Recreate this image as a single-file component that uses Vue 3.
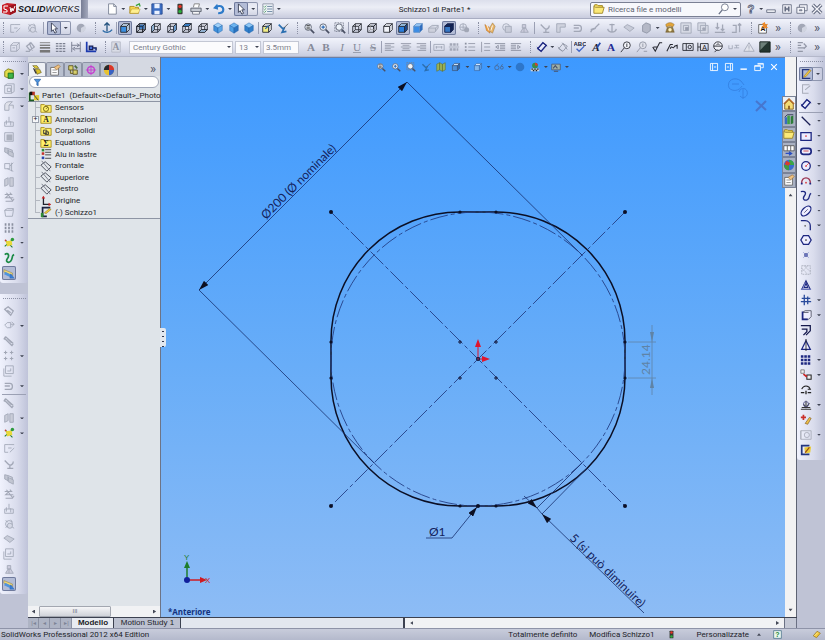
<script setup>
import { h, ref } from 'vue'

const G = '#a2a7b6'
const N = '#1d2780'
const K = '#23252e'

const line = (d, c = G, w = 1, f = 'none') => `<path d="${d}" stroke="${c}" stroke-width="${w}" fill="${f}"/>`
const cube = (front, top, side, c = K) =>
  line('M2 5h7v7h-7z', c, 1, front) + line('M2 5l3-3h7l-3 3z', c, 1, top) + line('M9 5l3-3v7l-3 3z', c, 1, side)
const wire = (c = K) => line('M2 5h7v7h-7zM2 5l3-3h7l-3 3M12 2v7l-3 3M5 2v7h7M5 9l-3 3', c)
const iso = (a, b, c) =>
  line('M7 1l5 3l-5 3l-5-3z', '#1d5fa8', 0.5, a) + line('M2 4l5 3v6l-5-3z', '#1d5fa8', 0.5, b) + line('M12 4l-5 3v6l5-3z', '#1d5fa8', 0.5, c)
const glass = (inner, c = '#555b6b') =>
  `<circle cx="6" cy="6" r="3.8" stroke="${c}" fill="#eef3fa"/>` + line('M9 9l4 4', '#4a5064', 2) + inner
const letter = (t, c, extra = '') =>
  `<text x="7" y="12" text-anchor="middle" font-family="Liberation Serif, serif" font-size="13" fill="${c}" ${extra}>${t}</text>`
const folder = (inner) => line('M1 3h4l1 1h7v8h-12z', '#a48a1c', 1, '#fff06a') + inner
const pencil = (c = '#f0c63c') => line('M5 9l6-7l2 1l-6 7l-3 1z', '#8a6414', 0.5, c)

const icons = {
  doc: line('M3 1h6l3 3v9h-9z', '#777f92', 1, '#fff') + line('M9 1v3h3', '#777f92'),
  open: line('M1 4h5l1 1h4v7h-10z', '#a8871c', 1, '#f7d750') + line('M3 7h10l-2 5h-10z', '#a8871c', 0.5, '#ffef8f') + line('M8 3l4-2l1 3', '#3ba33b', 1.5),
  save: line('M1 1h12v12h-12z', '#25478f', 1, '#3d6fc4') + '<path d="M4 1h6v5h-6zM4 9h6v4h-6z" fill="#eaf1ff"/>',
  lights: '<rect x="4" y="1" width="6" height="12" rx="1" fill="#363b35"/><circle cx="7" cy="4" r="2" fill="#e53427"/><circle cx="7" cy="10" r="2" fill="#2cae3c"/>',
  print: line('M4 5l1-4h6l-1 4', '#777', 1, '#fff') + line('M1 6h12v4h-12z', '#555b68', 1, '#c4c9d2') + line('M3 10h8v3h-8z', '#6c7280', 1, '#fff'),
  undo: line('M3 5c5-3 9-1 9 3s-4 4-6 4', '#2e7bc9', 2.5) + '<path d="M0 6l5-5l1 7z" fill="#2e7bc9"/>',
  cursor: line('M4 1v10l2-2l2 4l2-1l-2-4h3z', '#30374d', 1, '#fff'),
  options: line('M1 1h12v12h-12z', '#8a92a4', 1, '#eef3f8') + line('M6 4h6M6 7h6M6 10h6', '#5a7896') + line('M2 4l1 1l2-2M2 7l1 1l2-2M2 10l1 1l2-2', '#4c9a5e'),
  help: '<text x="7" y="12" text-anchor="middle" font-family="Liberation Sans, sans-serif" font-weight="700" font-size="13" fill="#fff" stroke="#59617a">?</text>',
  min: line('M2 8h10v3h-10z', '#646b80', 1, '#f4f5fa'),
  restore: line('M2 2h10v10h-10z', '#646b80', 1, '#f4f5fa') + line('M5 4v6M9 4v6M5 7h4', '#646b80', 2),
  windows: line('M4 2h9v7h-9z', '#646b80', 1, '#f4f5fa') + line('M1 5h9v7h-9z', '#646b80', 1, '#f4f5fa') + line('M4 8h3v1h-3z', '#646b80'),
  close: line('M2 2l10 10M12 2l-10 10', '#646b80', 4) + line('M2 2l10 10M12 2l-10 10', '#f4f5fa', 1.5),
  search: '<circle cx="8" cy="5" r="4" stroke="#697186" fill="#fff"/>' + line('M5 8l-4 5', '#697186', 1.5),
  folderY: line('M1 4l1-2h3l1 1h5v2', '#9c8320', 1, '#f2d64e') + line('M1 12v-8l2 1h10l-2 7z', '#9c8320', 1, '#fbe978'),

  gSketch: line('M2 12v-9h4M6 3h7M6 7h4M2 12h4M8 12l5-5'),
  gGear: line('M3 3l3 2M9 2l2 3M3 11l3-2M10 10l3 2') + `<circle cx="7" cy="7" r="4" stroke="${G}" fill="none"/><circle cx="8" cy="9" r="3" stroke="${G}" fill="#d6d9e6"/>`,
  gBall: `<circle cx="7" cy="7" r="5" fill="${G}"/><path d="M7 7l5-3v6l-5 3z" fill="#d0d4e0"/>`,
  normal: line('M7 1v10M4 4l3-3l3 3', '#23527f', 1.5) + line('M2 10c3 3 8 3 11-1', '#2d6ca8', 1.5),
  vFront: cube('#3c8fe0', '#cfe4f8', '#cfe4f8'),
  vBack: cube('#dfe6f2', '#dfe6f2', '#dfe6f2') + '<path d="M5 3h6v5h-6z" fill="#3277c4"/>' + wire(),
  vLeft: wire() + line('M2 5l3-3v7l-3 3z', K, 1, '#a7cdf2'),
  vRight: wire() + line('M9 5l3-3v7l-3 3z', K, 1, '#77b1ea'),
  vTop: wire() + line('M2 5l3-3h7l-3 3z', K, 1, '#3c8fe0'),
  vBottom: wire() + line('M2 12l3-3h7l-3 3z', K, 1, '#a7cdf2'),
  iso1: iso('#9fd0f8', '#3d8fdb', '#5aa6e8'),
  iso2: iso('#6db4f0', '#4f9fe4', '#2c74c0'),
  iso3: iso('#8cc6f5', '#2f7fcc', '#2f7fcc'),
  viewSel: cube('#f3ee86', '#eee', '#eee') + line('M5 8l4-4', '#2d6ca8', 1.5),
  spray: line('M2 3l5 5M9 6l-3 6l5-1', '#2b6fb0', 2) + line('M8 7l5-5', '#555', 1),
  zFit: glass(line('M4 6h4M4 4h4M4 8h4', '#333')),
  zIn: glass(line('M4 6h4M6 4v4', '#2d6cb8', 1.5)),
  zArea: '<path d="M1 1h10v10h-10z" stroke="#777d8d" stroke-dasharray="2 1"/>' + glass(''),
  wire: wire(),
  hidden: cube('none', 'none', 'none') + line('M5 3v6h6M5 9l-2 2', '#999'),
  noHidden: cube('#f1f3f9', '#f1f3f9', '#f1f3f9'),
  shadeEdge: cube('#2c7fdc', '#a7d2fb', '#1a4e9b'),
  shade: cube('#3b8de6', '#9dcdf9', '#2766bd', '#5c8fc8'),
  gCube: line('M2 7l4-3h7l-3 3zM2 7v5h7l4-5v-3M10 7v4', G, 1, '#cdd0dc'),
  shadow: cube('#3677c4', '#14285a', '#14285a', '#101c48'),
  gGlobe: `<circle cx="6" cy="6" r="4" stroke="${G}" fill="none"/><circle cx="10" cy="9" r="3" fill="${G}"/>` + line('M2 6h8M6 2v8'),
  hands: line('M1 3l2 7l4 3l-1-7z', '#a25d17', 0.5, '#f2a341') + line('M7 6l3-5l3 4l-3 8l-3-2z', '#8c6a38', 0.5, '#e8b569') + line('M3 3l3 7M10 4l-2 6', '#fff'),
  gCirc: `<circle cx="6" cy="6" r="4" stroke="${G}" fill="none"/>` + line('M5 5h7v7h-7z', G, 1, '#c8ccd9'),
  gPers: line('M5 3h4v4h-4zM3 12l3-5h3l3 5zM7 7v5', G, 1, '#ccd'),
  gHook: line('M2 3l4 4c3 3 6 0 6-3M5 12h7M8 8v4', G, 1.5),
  gFlag: line('M2 12v-10h10v4h-6v6z', G, 1, '#cfd2de'),
  gPipe: line('M2 4h6c4 0 4 7 0 7h-6M2 7h6', G, 1.5),
  gSwoop: line('M2 12c2-7 5-1 6-6l4-4M2 9l5-2', G, 1.5),
  gAnchor: line('M7 2v10M4 3h6M2 8c1 5 9 5 10 0', G, 1.5),
  gArrows: line('M1 6l4-3l8 4l-5 4l-4-3z', G, 1, '#c8ccd9'),
  gBox: line('M3 4l4-3l5 2v7l-4 3l-5-2z', '#8f95a5', 1, '#b4b8c6'),
  gSq: line('M1 1h12v12h-12zM4 4h6v6h-6z', G, 1, '#d8dbe6') + '<path d="M6 6h4v4h-4z" fill="#989dad"/>',
  gSq2: line('M1 1h9v9h-9zM4 4h9v9h-9z', G, 1, '#d8dbe6') + `<circle cx="8" cy="8" r="2" fill="${G}"/>`,
  gDown: line('M1 12h12M4 1v7M2 6l2 2l2-2M10 3v7M8 8l2 2l2-2', G, 1.5),
  gUp: line('M1 12h5v-8h-4M10 12v-10M8 4l2-2l2 2', G, 1.5),
  phone: line('M2 3c3-3 7-3 10 0l-2 3l-2-1h-3l-2 1z', '#7a5a1e', 0.5, '#e2a53a') + line('M4 6h6l2 6h-10z', '#6a5520', 0.5, '#8d7640') + '<circle cx="7" cy="9" r="2" fill="#fff3c0"/>',
  newA: line('M2 3h9v10h-9z', '#555', 1, '#fff') + '<text x="4" y="11" font-family="Liberation Sans" font-size="8" font-weight="700" fill="#111">A</text><path d="M9 0l1 3l3-1l-2 3l2 2l-3 0l-1 2l-1-3l-3 0l2-2l-1-2z" fill="#ef8b28"/>',
  gLayer: line('M2 5l3-3h7v7l-3 3h-7zM2 5h7v7M9 5l3-3', G) + line('M4 8h3', G),
  gPaint: line('M3 6l5-4l4 5l-5 4zM2 12h5M6 2l4 9', G, 1.5),
  lines: line('M1 2h12', '#777') + line('M1 5h12', '#777', 1.5) + line('M1 8h12', '#777', 2) + line('M1 12h12', '#777', 3),
  dashes: `<path d="M1 3h12M1 6h12M1 9h12M1 12h12" stroke="#7b8090" stroke-width="1.5" stroke-dasharray="3 1"/>`,
  gDims: line('M2 1v12M12 1v12M2 5h9M5 9h7M8 3l3 2l-3 2M6 7l-3 2l3 2', '#70768a'),
  layerBlue: line('M2 1v11h11', '#1c3bb0', 2) + line('M5 6h4v4h-4zM9 8h4v3', '#16205c', 1.5, '#4773e0'),
  gA: line('M2 1h10v12h-10z', '#b4b8c6', 1, '#d9dce6') + '<text x="7" y="11" text-anchor="middle" font-family="Liberation Serif" font-size="11" font-weight="700" fill="#8d92a2">A</text>',
  tA: letter('A', '#858a99', 'font-weight="700"'),
  tB: letter('B', '#858a99', 'font-weight="700"'),
  tI: letter('I', '#858a99', 'font-style="italic"'),
  tU: letter('U', '#858a99', 'text-decoration="underline"'),
  tS: letter('S', '#858a99', 'text-decoration="line-through"'),
  alL: line('M1 3h11M1 5h7M1 7h11M1 9h7M1 11h10', '#9297a6'),
  alC: line('M1 3h12M3 5h8M1 7h12M3 9h8M2 11h10', '#9297a6'),
  alR: line('M2 3h11M6 5h7M2 7h11M6 9h7M3 11h10', '#9297a6'),
  gFit: line('M1 4h12v7h-12zM3 7h8M4 6v3M10 6v3', G),
  gDots: `<path d="M2 4h10M2 10h10" stroke="${G}" stroke-width="3" stroke-dasharray="3 1"/>` + line('M1 7h12'),
  bullets: line('M5 3h8M5 7h8M5 11h8', '#9297a6') + line('M1 3h2M1 7h2M1 11h2', '#8a8f9f', 2),
  numbers: line('M6 3h7M6 7h7M6 11h7M3 1v12', '#9297a6'),
  indL: line('M1 3h12M7 5h6M7 7h6M7 9h6M1 11h12M5 5l-3 2l3 2z', '#8a8f9f'),
  indR: line('M1 3h12M1 5h6M1 7h6M1 9h6M1 11h12M9 5l3 2l-3 2z', '#8a8f9f'),
  dim: line('M2 9l6-7l4 3l-6 7z', N, 1.5, '#e9ecfb') + line('M1 7l5 5M8 2l5 4', N, 1),
  gDim: line('M2 9l5-6l5 3l-5 6zM6 2l6 8M1 7l5 5', '#8d93a3'),
  abc: '<text x="7" y="6" text-anchor="middle" font-family="Liberation Sans" font-size="7" font-weight="700" fill="#1a1d3c">ABC</text>' + line('M3 9l3 3l6-6', '#3d63c8', 1.5),
  fmt: letter('A', '#1b1f35', 'font-weight="700" font-style="italic"') + line('M8 8l4-6', '#274aaa', 2),
  blueA: letter('A', '#1f2c96', 'font-weight="700"'),
  bal: `<circle cx="8" cy="5" r="4" stroke="${K}" fill="#f4f5fb"/>` + line('M5 8l-4 5M8 3v4', K),
  gBal: `<circle cx="8" cy="5" r="4" stroke="#8d92a2" fill="#e0e2eb"/>` + line('M5 8l-4 5M8 3v4M9 12h4', '#8d92a2'),
  rough: line('M2 7l3 5l5-10h3M3 7h5', K, 1.2),
  weld: line('M1 12l4-8h3M5 9c2-5 3 2 5-3l3-1v4', K, 1.2),
  tol: line('M1 3h12v8h-12zM5 3v8', K) + `<circle cx="9" cy="7" r="2" stroke="${K}" fill="none"/>`,
  datum: line('M1 2v10M1 7h3M4 3h9v8h-9z', K) + '<text x="6" y="10" font-family="Liberation Sans" font-size="8" fill="#222">A</text>',
  target: `<circle cx="7" cy="6" r="5" stroke="${K}" fill="#f0f1f7"/>` + line('M2 6h10M3 13l3-3M5 5l2-2l2 2', K),
  gUs: line('M1 5v4h4v-4M7 8h6M10 5v3M8 5l5 0', G),
  gWarn: line('M7 2l6 10h-12zM7 5v4M7 10v1', G, 1, '#e2e4ec'),
  hatch: '<path d="M1 1h12v12h-12z" fill="#23352f"/><path d="M1 1h10l-10 10z" fill="#6c7f78"/>' + line('M1 1h12v12h-12z', '#14201c'),
  gList: line('M2 2h6M2 5h4M2 8h8M2 12h6M9 3l3 3l-3 3', '#9297a6', 1.5),

  boss: line('M2 4l4-3l6 2v7l-5 2l-5-2z', '#7a7a1a', 1, '#e3dc4a') + line('M6 6h6v6h-6z', '#166a1f', 1, '#3fb548'),
  gCut: line('M2 3l3-2h8v9l-3 2h-8zM2 3h8v9M5 6h4v4h-4z'),
  gFillet: line('M2 12v-5c0-4 3-5 6-5h3l-4 4v6zM7 6h5v4', G, 1, '#dfe1ea'),
  gRib: line('M7 1v6M2 7h10v5h-10zM4 5v5M9 6v5', G, 1),
  gShell: line('M2 2h10v10h-10z', G, 1) + '<path d="M4 4h7v7h-7z" fill="#abb0bd"/>',
  gDraft: line('M2 2l4 1v6l-4-2zM6 5l6 3v5l-6-3zM6 3l5 2v3', G, 1, '#c2c6d2'),
  gMove: line('M2 3h6v6h-6zM8 6l4-4M5 9l7 3M10 2v10'),
  gMir: line('M2 12v-8l4-2v8zM8 12v-10h4v10z', G, 1, '#c9ccd8'),
  gSwap: line('M2 4h8l-2-2M12 8h-9l3-3M3 12h8l2-3M4 2l7 9', G, 1.2),
  gWrap: line('M2 5l3-2h7v3l-1 6h-8zM2 5h9l1-2'),
  gGrid: `<path d="M2 3h11M2 7h11M2 11h11" stroke="#8c91a1" stroke-width="3" stroke-dasharray="2 2"/>`,
  refGeo: line('M2 11l9-8M3 4l8 8', '#1d7a2c', 1.2) + '<path d="M3 5l7-1l1 5l-6 2z" fill="#e8d83a"/><circle cx="11" cy="3" r="2" fill="#2d9a3e"/><circle cx="3" cy="4" r="1" fill="#c9372c"/>',
  curve: line('M2 3c4-3 6 1 3 5s3 6 5 1s0-5 3-6', '#1c8a48', 2),
  instant: line('M1 3l10 4v3l-10-4z', '#7d6d30', 0.5, '#f0d978') + line('M2 7l8 4', '#4f94dd', 3) + line('M9 8l4 5h-5z', '#2a5fb0', 0.5, '#3a7fd4'),
  gClip: line('M2 5l4-3l6 5l-3 5zM5 6l4 3', G, 1.5),
  gExp: line('M2 6l3-3h4v6h-4zM9 5h4M10 2l3 3l-3 3', G),
  gTube: line('M3 2l9 8M2 4l8 8M3 2l-2 3M12 10l-2 3M5 4l5 5', G, 1.5),
  gFour: line('M3 1v4M1 3h4M10 1v4M8 3h4M3 8v4M1 10h4M10 8v4M8 10h4', G, 1.2),
  gNote: line('M3 1h9v9h-9zM1 4v9h9M5 7h4v-3', G),

  tabTree: line('M2 2h5l2 3h-4z', '#5e5413', 0.7, '#e8d43c') + line('M5 6h5l2 4l-5 2z', '#5e5413', 0.7, '#d9c12c') + line('M3 5l3 6', '#333', 1.5),
  tabProp: line('M2 4h9v9h-9z', '#666', 1, '#fff') + line('M4 7h5M4 10h5', '#888') + line('M6 4l5-3l2 2l-4 4z', '#9c6a30', 0.7, '#efc383'),
  tabConf: line('M2 2h5v5h-5zM7 7h5v5h-5zM4 7v4h3', '#5b5320', 1, '#d7d06c') + line('M9 2l3 3', '#4a6a3a', 2),
  tabDim: '<circle cx="7" cy="7" r="4" stroke="#c63bd0" stroke-width="1.5" fill="none"/>' + line('M7 1v12M1 7h12', '#c63bd0', 1),
  tabDisp: '<circle cx="7" cy="7" r="6" fill="#e8c22e"/><path d="M7 7v-6a6 6 0 0 1 6 6z" fill="#d8352c"/><path d="M7 7h-6a6 6 0 0 1 6-6z" fill="#26282e"/><path d="M7 7h6a6 6 0 0 1-6 6z" fill="#3862c4"/>',
  funnel: line('M2 2h10l-4 5v5l-2-1v-4z', '#23589c', 1, '#4c93dc'),
  part: line('M2 3v9h5', '#1b5a22', 2) + '<path d="M4 2h4v4h-4z" fill="#b93626"/><path d="M7 6h6v6h-6z" fill="#e0c930"/><path d="M2 2h3v4h-3z" fill="#111"/>' + line('M7 6l5 6', '#333'),
  fSensor: folder('<circle cx="7" cy="8" r="3" stroke="#6b5b10" fill="none"/><path d="M7 8l2-2" stroke="#6b5b10"/>'),
  fAnn: folder('<text x="7" y="11" text-anchor="middle" font-family="Liberation Serif" font-size="9" font-weight="700" fill="#222">A</text>'),
  fBody: folder(line('M4 6h4v4h-4zM6 8h4v3h-4z', '#333')),
  fEq: folder('<text x="7" y="11" text-anchor="middle" font-family="Liberation Serif" font-size="9" font-weight="700" fill="#222">Σ</text>'),
  mat: line('M6 2h7M6 5h7M6 8h7M6 12h7', '#333', 1) + '<path d="M2 1h3v3h-3z" fill="#2f8c36"/><path d="M2 5h3v3h-3z" fill="#c5332b"/><path d="M2 10h3v3h-3z" fill="#2a48b0"/>',
  plane: line('M1 6l5-4l7 6l-5 5z', '#3b3f4b') + line('M2 1l10 12', '#6d7280'),
  origin: line('M4 2v9h8', '#20222c', 1.5) + '<path d="M2 4l2-3l2 3z" fill="#c22"/><path d="M10 9l3 2l-3 2z" fill="#c22"/>',
  sketch: line('M12 2h-9v10h5', '#1c2340', 2) + '<path d="M1 8h3v5h-3z" fill="#2f8c36"/>' + line('M5 8l6-5l2 1l-6 5z', '#7a5c12', 0.5, '#f0cf3c'),

  skExit: line('M11 2h-8v10h9', '#22357f', 1.5) + pencil(),
  gSk: line('M11 2h-8v10h7M6 8l6-5', '#a8acb9', 1.2),
  sLine: line('M2 2l10 10', '#1b1f55', 1.5),
  sRect: line('M1 3h12v9h-12z', N, 1.5, '#eef') + '<circle cx="7" cy="7" r="1" fill="#d33"/>',
  sSlot: `<rect x="1" y="4" width="12" height="7" rx="3" stroke="${N}" stroke-width="2" fill="#eef"/><path d="M4 7h6" stroke="#c33"/>`,
  sCirc: `<circle cx="7" cy="7" r="5" stroke="${N}" stroke-width="1.5" fill="#eef"/><circle cx="7" cy="7" r="1" fill="#d33"/>` + line('M7 7l4-4', '#d55'),
  sArc: line('M2 10c-1-9 11-9 10 0', '#9b3350', 1.5) + '<circle cx="7" cy="9" r="1" fill="#d33"/><path d="M1 9h2v2h-2zM11 9h2v2h-2z" fill="#1d2780"/>',
  sSpline: line('M1 2c5-1 7 1 4 5s1 6 4 4s1-6 4-7', N, 1.5),
  sEll: `<ellipse cx="7" cy="7" rx="7" ry="4" transform="rotate(-45 7 7)" stroke="${N}" stroke-width="1.5" fill="#eef"/>` + line('M5 9l4-4', '#557'),
  sFil: line('M1 2h5c4 0 6 3 6 6v5', N, 1.5) + '<circle cx="6" cy="8" r="1" fill="#666"/>',
  sPoly: line('M4 2h6l3 5l-3 5h-6l-3-5z', N, 1.5, '#eef') + '<circle cx="7" cy="7" r="1" fill="#333"/>',
  sPoint: '<circle cx="7" cy="7" r="2" fill="#1d2780"/>' + line('M4 4l6 6M10 4l-6 6', '#7782c8'),
  gHatch: `<path d="M2 2h10v10h-10zM5 2l7 7M2 5l7 7M9 2l-7 7" stroke="#aaaebb" fill="none" stroke-dasharray="2 1"/>`,
  sText: line('M7 2l5 10h-10zM7 5l2 5h-4z', N, 1.2) + line('M3 12l3-8M1 12h12', '#7782c8'),
  sTrim: line('M2 5h10M1 9h12M5 1v12M9 3v9', '#284a9c', 1.5),
  sConv: line('M3 4l3-2h7v7l-3 3h-7zM3 4h7', '#4b5060', 1, '#eef') + line('M3 3v9h6', N, 2),
  sOff: line('M1 2h11v6l-5 5', '#15194c', 1.5) + line('M2 6h6v3l-4 4', '#15194c', 1.5),
  sMir: line('M7 2l5 10h-10z', N, 1.5, '#eef') + line('M7 0v14', '#222') ,
  sPat: `<path d="M1 3h12M1 7h12M1 11h12" stroke="${N}" stroke-width="3" stroke-dasharray="3 1"/>`,
  sMove: line('M1 1h4v4h-4z', '#777', 1, '#eee') + line('M8 7h5v5h-5z', '#222', 1.2, '#eee') + line('M4 6l4 3', '#c22', 2),
  sRel: line('M2 6c2-5 8-5 10 0M10 3l2 3l-3 0', '#222', 1.2) + line('M1 10h4M7 8v4M9 10h4', '#222', 1.5),
  sFix: line('M2 10h10M7 10v-8M4 6l3 4l4-5M1 12h12', '#333', 1.2) + `<circle cx="7" cy="6" r="3" stroke="#558" fill="none"/>`,
  sAdd: line('M1 4h6M4 1v6', '#c9302c', 2) + line('M6 11l5-7l2 1l-4 7z', '#7a5312', 0.7, '#eec04a'),
  gRep: line('M1 2h12v10h-12zM1 2v10', '#a8acb9') + '<circle cx="8" cy="7" r="3" stroke="#a8acb9" fill="none"/>',
  sQuick: line('M11 2h-9v10h9', '#22357f', 2) + '<path d="M5 4l8-1l-1 7l-6 1z" fill="#e9cb3b"/>' + line('M6 10l5-6', '#9c4a16', 1.5),

  home: line('M2 7l5-5l5 5v6h-10z', '#7c5a1c', 1, '#f6dc73') + line('M1 7l6-6l6 6', '#b5651f', 1.5) + '<path d="M6 9h2v4h-2z" fill="#8a5a1c"/>',
  lib: '<path d="M2 5h3v8h-3z" fill="#3a6cc2"/><path d="M5 3h3v10h-3z" fill="#3da044"/><path d="M9 4l3-1v9l-3 1z" fill="#2d7c3a"/>' + line('M2 5l3-3h7', '#335'),
  views: line('M1 2h12v6h-12zM5 2v6M9 2v6', '#555', 1, '#fff') + line('M3 11h6M7 9l3 2l-3 2', '#2a4ec0', 1.5),
  globe: '<circle cx="7" cy="7" r="6" fill="#3a6cd0"/><path d="M7 1a6 6 0 0 1 6 6h-6z" fill="#39a845"/><path d="M7 7l-6 0a6 6 0 0 0 6 6z" fill="#3e9c42"/><path d="M4 2l5 3l-3 3l-4-2z" fill="#d83a30"/>',

  section: line('M1 3l4-2l4 2l4-2v10l-4 2l-4-2l-4 2z', '#5c6a24', 0.7, '#9ab25a') + line('M5 1v10M9 3v10', '#5c6a24'),
  orient: cube('#4d90da', '#c8dff5', '#2f66a8', '#3d567c'),
  dispStyle: cube('#7fb6ee', '#cfe4fa', '#5a9ae0', '#3c6fae'),
  glasses: `<circle cx="4" cy="8" r="3" stroke="#4a6080" fill="none"/><circle cx="11" cy="8" r="2" stroke="#4a6080" fill="none"/>` + line('M3 5l3-3M10 6l2-3', '#4a6080'),
  sphere: '<circle cx="7" cy="7" r="6" fill="#2d76ca"/>',
  scene: '<circle cx="7" cy="5" r="4" fill="#3a8c48"/><path d="M7 1a4 4 0 0 1 4 4h-4z" fill="#d0402f"/><path d="M1 9h12v4h-12z" fill="#ccd5de"/>' + line('M2 10h2M6 10h2M10 10h2M4 12h2M8 12h2', '#222', 2),
  viewSet: line('M1 3h12v8h-12z', '#48526a', 1, '#9fb0a6') + line('M3 9l3-4l3 4M4 13h6', '#48526a', 1.5),
  wPrev: line('M2 2h10v10h-10zM5 2v10M10 7h-3', '#fff', 1.2),
  wNext: line('M2 2h10v10h-10zM9 2v10M4 7h3', '#fff', 1.2),
  wMin: line('M2 10h9', '#fff', 2),
  wRest: line('M5 2h8v6h-3M1 5h8v7h-8zM1 6h8M5 3h8', '#fff', 1.2),
  wClose: line('M3 3l8 8M11 3l-8 8', '#fff', 1.5),
  tag: line('M2 9l6-7l5 3l-6 7z', '#8d6a14', 1, '#f2c83c') + line('M4 9l5-5', '#fff3b0', 1.2),
  helpG: line('M1 1h12v12h-12z', '#315f7c', 1, '#e9f6ee') + '<text x="7" y="11" text-anchor="middle" font-family="Liberation Sans" font-size="11" font-weight="700" fill="#218a35">?</text>'
}

const Icon = (p) => h('svg', { class: 'ico', viewBox: '0 0 14 14', fill: 'none', 'aria-hidden': 'true', innerHTML: icons[p.name] })
Icon.props = ['name']

// A tool list is a string: "|" separator, "v" caret, ">>" overflow,
// "!name" pressed, "~name" with caret, "+name" pressed with caret.
const Tools = (p) => h('div', { class: 'tools' + (p.vertical ? ' vertical' : '') }, p.list.split(' ').map((t) => {
  if (t === '|') return h('span', { class: 'sep' })
  if (t === 'v') return h('span', { class: 'caret' })
  if (t === '>>') return h('button', { class: 'more', 'aria-label': 'more' }, '»')
  const name = t.replace(/[!+~]/, '')
  const btn = h('button', { class: 'tool' + (/^[!+]/.test(t) ? ' on' : ''), 'aria-label': name }, [h(Icon, { name })])
  if (t[0] === '+' || t[0] === '~') return h('span', { class: t[0] === '+' ? 'split' : 'drop' }, [btn, h('span', { class: 'caret' })])
  return btn
}))
Tools.props = ['list', 'vertical']

const rowTwo = [
  'gSketch gGear | +cursor gBall',
  'normal | !vFront vBack vLeft vRight vTop vBottom iso1 iso2 iso3 | viewSel spray',
  'zFit zIn zArea | wire hidden noHidden !shadeEdge shade gCube !shadow gGlobe',
  'hands gCirc gPers | gHook gFlag gPipe gSwoop gAnchor gArrows gBox v phone gSq gSq2 gDown gUp',
  'newA >>',
  'gBall >>'
]
const leftTop = '~boss ~gCut | ~gFillet gRib gShell gDraft gMove gMir gSwap gWrap ~gGrid ~refGeo ~curve !instant'
const leftBottom = 'gClip ~gExp gTube ~gFour gNote ~gPipe | gTube ~gMir ~refGeo gSketch gHook gDraft gSwap gRib gGear gArrows gNote gPers !instant'
const right = '+skExit gSk ~dim | ~sLine ~sRect ~sSlot ~sCirc ~sArc ~sSpline ~sEll ~sFil sPoly sPoint gHatch sText ~sTrim ~sConv sOff sMir ~sPat ~sMove sRel ~sFix sAdd ~gRep sQuick'

const tree = [
  ['fSensor', 'Sensors'], ['fAnn', 'Annotazioni'], ['fBody', 'Corpi solidi'], ['fEq', 'Equations'],
  ['mat', 'Alu in lastre'], ['plane', 'Frontale'], ['plane', 'Superiore'], ['plane', 'Destro'],
  ['origin', 'Origine'], ['sketch', '(-) Schizzo1']
]
const panelTabs = ['tabTree', 'tabProp', 'tabConf', 'tabDim', 'tabDisp']
const taskTabs = ['home', 'lib', 'folderY', 'views', 'globe', 'tabProp']
const ends = [[331, 212], [625, 212], [331, 506], [625, 506]]
const centres = [[460, 342], [496, 342], [460, 378], [496, 378]]
const joints = [[460, 212], [496, 212], [460, 506], [496, 506], [331, 342], [331, 378], [625, 342], [625, 378]]
const query = ref('')
const filter = ref('')
</script>

<template>
  <div class="app">
    <header>
      <div class="titlebar">
        <div class="brand">
          <svg class="logo" viewBox="0 0 14 14" aria-hidden="true">
            <path d="M0 3l5-2l9 1v8l-6 3l-8-2z" fill="#c8202b" />
            <path d="M7 4l7-2v8l-6 3z" fill="#9c141e" />
            <path d="M6 4h-4v3l3 1v2h-4M8 5l1 5l1-4l1 3l2-5" stroke="#fff" fill="none" />
          </svg>
          <span class="name"><b>SOLID</b>WORKS</span>
        </div>
        <span class="brand-tab"></span>
        <Tools class="quick" list="doc v open v save v lights print v undo v +cursor options v" />
        <h1>Schizzo1 di Parte1 *</h1>
        <label class="search">
          <Icon name="folderY" />
          <input v-model="query" placeholder="Ricerca file e modelli" aria-label="Ricerca file e modelli" />
          <Icon name="search" /><span class="caret"></span>
        </label>
        <Tools class="window" list="help v min restore windows close" />
      </div>
      <div class="row row-two">
        <section v-for="g in rowTwo" :key="g" class="group"><Tools :list="g" /></section>
      </div>
      <div class="row row-three">
        <section class="group"><Tools list="gLayer gPaint lines dashes gDims layerBlue" /></section>
        <section class="group fonts">
          <button class="tool" aria-label="font"><Icon name="gA" /></button>
          <span class="pick"><select aria-label="font"><option>Century Gothic</option></select><i class="caret"></i></span>
          <span class="pick small"><select aria-label="size"><option>13</option></select><i class="caret"></i></span>
          <input class="height" value="3.5mm" aria-label="height" />
          <Tools list="tA tB tI tU tS | alL alC alR | gFit gDots bullets numbers indL indR" />
        </section>
        <section class="group"><Tools list="dim v gDim | abc fmt blueA bal gBal rough weld tol datum target gUs gWarn hatch >>" /></section>
        <section class="group"><Tools list="gList >>" /></section>
      </div>
    </header>

    <main>
      <aside class="rail">
        <div class="bar upper"><Tools vertical="1" :list="leftTop" /></div>
        <div class="bar lower"><Tools vertical="1" :list="leftBottom" /></div>
      </aside>

      <div class="work">
        <div class="views">
          <aside class="panel">
            <nav class="tabs">
              <button v-for="(t, i) in panelTabs" :key="t" :class="{ current: !i }" :aria-label="t"><Icon :name="t" /></button>
              <button class="more" aria-label="more">»</button>
            </nav>
            <label class="filter"><Icon name="funnel" /><input v-model="filter" aria-label="filter" /></label>
            <div class="root"><Icon name="part" /><span>Parte1&nbsp; (Default&lt;&lt;Default&gt;_Photo</span></div>
            <ul class="tree">
              <li v-for="[ic, label] in tree" :key="label" :class="{ expandable: ic === 'fAnn' }"><Icon :name="ic" />{{ label }}</li>
            </ul>
            <div class="hscroll panel-scroll"><i class="arr left"></i><span class="thumb">III</span><i class="arr right"></i></div>
            <button class="handle" aria-label="collapse"></button>
          </aside>

          <section class="canvas">
            <svg class="drawing" viewBox="161 57 624 560" fill="none" stroke="#14183a">
              <defs>
                <marker id="tip" viewBox="0 0 10 6" refX="10" refY="3" markerWidth="10" markerHeight="6" markerUnits="userSpaceOnUse" orient="auto-start-reverse">
                  <path d="M0 0l10 3l-10 3z" fill="#0c0f22" stroke="none" />
                </marker>
                <marker id="tipGrey" viewBox="0 0 10 4" refX="10" refY="2" markerWidth="10" markerHeight="4" markerUnits="userSpaceOnUse" orient="auto">
                  <path d="M0 0l10 2l-10 2z" fill="#5f83a6" stroke="none" />
                </marker>
              </defs>
              <rect x="331" y="212" width="294" height="294" rx="129" stroke="#0b0f25" stroke-width="1.5" />
              <g stroke="#243f86" stroke-width="0.9" stroke-dasharray="18 3 4 3">
                <circle cx="478" cy="359" r="147" />
                <path d="M331 212l294 294M625 212l-294 294" />
              </g>
              <g stroke="#16306f" stroke-width="0.8">
                <path d="M407 82l175 173M199 290l175 173" />
                <path d="M407 82L199 290" marker-start="url(#tip)" marker-end="url(#tip)" />
                <path d="M582 463l-45 45M587 468l-45 46" />
                <path d="M524 496l13 12" marker-end="url(#tip)" />
                <path d="M537 508l5 6" />
                <path d="M644 613l-102-99" marker-end="url(#tip)" />
                <path d="M426 538h26l25-31" marker-end="url(#tip)" />
              </g>
              <g fill="#0b0f25" stroke="none">
                <circle v-for="[x, y] in ends" :key="x + '-' + y" :cx="x" :cy="y" r="2" />
                <circle v-for="[x, y] in joints" :key="x + '-' + y" :cx="x" :cy="y" r="1.6" />
                <circle cx="478" cy="506" r="2" />
              </g>
              <path v-for="[x, y] in centres" :key="'c' + x + y" :d="`M${x - 2} ${y}h4M${x} ${y - 2}v4`" />
              <g stroke="#5f83a6" stroke-width="0.8">
                <path d="M628 342h28M628 378h28" />
                <path d="M652 325v17" marker-end="url(#tipGrey)" />
                <path d="M652 395v-17" marker-end="url(#tipGrey)" />
                <path d="M652 342v36" />
              </g>
              <g stroke="#e0152c">
                <path d="M478 359v-14M478 359h6" />
                <path d="M475 347l3-8l3 8zM482 356l8 3l-8 3z" fill="#e0152c" stroke="none" />
              </g>
              <circle cx="478" cy="359" r="1.5" stroke="#101533" />
              <g class="dims">
                <text transform="translate(266 220) rotate(-45)">Ø200 (Ø nominale)</text>
                <text transform="translate(569 539) rotate(44)">5 (si può diminuire)</text>
                <text x="429" y="536">Ø1</text>
                <text class="grey" transform="translate(650 375) rotate(-90)">24.14</text>
              </g>
              <g stroke-width="1.5">
                <path d="M187 580v-14" stroke="#1e7d2c" /><path d="M184 568l3-7l3 7z" fill="#1e7d2c" stroke="none" />
                <path d="M187 580h14" stroke="#cf1b22" /><path d="M200 577l7 3l-7 3z" fill="#cf1b22" stroke="none" />
                <circle cx="187" cy="580" r="3" fill="#10209c" stroke="none" />
              </g>
              <text class="axis" x="184" y="560" fill="#1e7d2c">Y</text>
              <text class="axis" x="205" y="583" fill="#cf1b22">X</text>
              <g stroke="#2c6fd0" opacity="0.5">
                <path d="M729 88c-3-8 6-12 12-7l3 4M729 88c4 4 10 3 13-2M732 84h7" />
                <path d="M740 96c3 4 9 0 7-5c-2-4-7-3-8 1M743 89v10" />
                <path d="M756 101l10 9M766 101l-10 10" stroke="#4a52a0" stroke-width="2" />
              </g>
            </svg>
            <div class="overlay">
              <Tools class="heads-up" list="zFit zIn zArea spray section ~orient ~dispStyle ~glasses sphere ~scene ~viewSet" />
              <Tools class="doc-window" list="wPrev wNext wMin wRest wClose" />
            </div>
            <span class="view-name">*Anteriore</span>
          </section>

          <aside class="task">
            <nav><button v-for="(t, i) in taskTabs" :key="t" :class="{ current: !i }" :aria-label="t"><Icon :name="t" /></button></nav>
            <div class="vscroll"><i class="arr up"></i><i class="arr down"></i></div>
          </aside>
        </div>

        <nav class="sheets">
          <button v-for="s in ['|◂', '◂', '▸', '▸|']" :key="s" class="step">{{ s }}</button>
          <button class="sheet current">Modello</button>
          <button class="sheet">Motion Study 1</button>
          <span class="strip"></span>
          <span class="hscroll"><i class="arr left"></i><i class="arr right"></i></span>
          <span class="corner"></span>
        </nav>
      </div>

      <aside class="rail">
        <div class="bar tall"><Tools vertical="1" :list="right" /></div>
      </aside>
    </main>

    <footer>
      <span class="edition">SolidWorks Professional 2012 x64 Edition</span>
      <span>Totalmente definito</span>
      <span>Modifica Schizzo1</span>
      <Icon name="lights" />
      <span class="custom">Personalizzate <i class="arr up"></i></span>
      <Icon name="helpG" />
      <Icon name="tag" class="last" />
    </footer>
  </div>
</template>

<style>
body {
  margin: 0;
  overflow: hidden;
}
.app button,
.app input,
.app select {
  margin: 0;
  padding: 0;
  border: 0;
  background: none;
  font: inherit;
  color: inherit;
  min-width: 0;
  outline: none;
}
.app .ico {
  width: 12px;
  height: 12px;
  flex: none;
  display: block;
}
.tools {
  display: flex;
  flex: 1;
  align-items: center;
  justify-content: space-between;
  min-width: 0;
}
.tools .tool {
  width: 14px;
  height: 14px;
  flex: none;
  display: grid;
  place-items: center;
}
.app .tools .on {
  background: #b3bcd6;
  box-shadow: inset 0 0 0 1px #6f7a9c;
  border-radius: 2px;
}
.tools .sep {
  width: 1px;
  height: 12px;
  background: #9ba0b4;
}
.app .caret {
  flex: none;
  width: 4px;
  height: 2px;
  background: #3e4352;
  clip-path: polygon(0 0, 100% 0, 50% 100%);
}
.app .more {
  width: 10px;
  font-size: 13px;
  line-height: 12px;
  color: #4e5468;
}
.tools .drop {
  display: flex;
  align-items: center;
  gap: 2px;
}
.tools .split {
  display: flex;
  align-items: center;
  gap: 3px;
  padding-right: 3px;
  border-radius: 2px;
  box-shadow: inset 0 0 0 1px #8e96ae;
}
.tools.vertical {
  flex-direction: column;
  align-items: flex-start;
}
.tools.vertical .sep {
  width: 24px;
  height: 1px;
}
.tools.vertical .drop {
  width: 22px;
  justify-content: space-between;
}
.app .arr {
  flex: none;
  width: 4px;
  height: 4px;
  background: #454a58;
}
.arr.left { clip-path: polygon(100% 0, 100% 100%, 20% 50%); }
.arr.right { clip-path: polygon(0 0, 0 100%, 80% 50%); }
.arr.up { clip-path: polygon(0 80%, 100% 80%, 50% 20%); }
.arr.down { clip-path: polygon(0 20%, 100% 20%, 50% 80%); }
</style>

<style scoped>
.app {
  height: 100vh;
  display: flex;
  flex-direction: column;
  overflow: hidden;
  font: 8px/11px Roboto, "Liberation Sans", sans-serif;
  color: #1c1e28;
  background: #bfc3d5;
}
.titlebar {
  height: 18px;
  display: flex;
  align-items: center;
  background: linear-gradient(#dcdfec, #eceef6 40%, #c9ccde);
  border-bottom: 1px solid #a9adc2;
}
.brand {
  display: flex;
  align-items: center;
  gap: 2px;
  width: 81px;
  padding-left: 2px;
  box-sizing: border-box;
}
.logo {
  flex: none;
  width: 14px;
  height: 14px;
}
.name {
  font: italic 9px/14px "Liberation Sans", sans-serif;
  color: #15161c;
}
.name b {
  font-weight: 700;
}
.brand-tab {
  align-self: stretch;
  width: 7px;
  background: linear-gradient(90deg, #777d94, #a4a9bd);
}
.quick {
  flex: none;
  width: 176px;
  margin-left: 17px;
}
h1 {
  flex: 1;
  margin: 0;
  padding-right: 2px;
  font-size: 8px;
  font-weight: 400;
  text-align: center;
}
.search {
  display: flex;
  align-items: center;
  gap: 3px;
  width: 144px;
  height: 13px;
  padding: 0 3px 0 2px;
  border: 1px solid #7a8094;
  border-radius: 2px;
  background: #f7f8fc;
}
.search input {
  flex: 1;
}
.search input::placeholder {
  color: #5d6271;
  opacity: 1;
}
.window {
  flex: none;
  width: 80px;
  margin: 0 1px 0 3px;
}
.row {
  display: grid;
  height: 19px;
}
.row-two {
  grid-template-columns: 92px 202px 181px 273px 39px 1fr;
}
.row-three {
  grid-template-columns: 102px 425px 260px 1fr;
}
.group {
  display: flex;
  align-items: center;
  padding: 0 4px 0 8px;
  background: linear-gradient(#f1f3fb, #dfe2ef 50%, #c9cddf);
  border-bottom: 1px solid #b4b8ca;
  box-sizing: border-box;
  min-width: 0;
  position: relative;
}
.group::before {
  content: "";
  position: absolute;
  left: 3px;
  top: 3px;
  bottom: 3px;
  border-left: 1px dotted #8b90a4;
}
.group:last-child {
  padding-right: 3px;
}
.fonts {
  gap: 2px;
}
.fonts > .tool {
  width: 14px;
  margin-right: 3px;
}
.pick {
  display: flex;
  align-items: center;
  width: 100px;
  height: 13px;
  padding: 0 2px;
  background: #fbfbfd;
  color: #7b7f8c;
  box-shadow: inset 0 0 0 1px #c3c7d4;
}
.pick select {
  flex: 1;
  appearance: none;
}
.pick.small {
  width: 22px;
}
.height {
  width: 36px;
  height: 13px;
  box-shadow: inset 0 0 0 1px #c3c7d4;
  text-indent: 3px;
}
.fonts .tools {
  margin-left: 3px;
}
main {
  flex: 1;
  min-height: 0;
  display: grid;
  grid-template-columns: 28px 1fr 28px;
  border-bottom: 1px solid #8e93a8;
}
.rail {
  display: flex;
  flex-direction: column;
  gap: 11px;
  background: #bfc3d5;
}
.bar {
  display: flex;
  padding: 10px 1px 3px 2px;
  box-sizing: border-box;
  background: linear-gradient(90deg, #f0f2fd, #d9dcec 60%, #bfc3d9);
  border-radius: 0 0 3px 3px;
  position: relative;
}
.bar::before {
  content: "";
  position: absolute;
  left: 3px;
  right: 2px;
  top: 4px;
  border-top: 1px dotted #8b90a4;
}
.upper { height: 226px; }
.lower { height: 300px; }
.tall { height: 403px; }
.work {
  display: flex;
  flex-direction: column;
  min-width: 0;
  min-height: 0;
}
.views {
  flex: 1;
  min-height: 0;
  display: grid;
  grid-template-columns: 133px 1fr 12px;
}
.panel {
  display: flex;
  flex-direction: column;
  background: #dfe4e9;
  border-right: 1px solid #6d7486;
  position: relative;
  min-width: 0;
}
.tabs {
  display: flex;
  height: 14px;
  padding-top: 5px;
  background: #d5d9e2;
}
.app .tabs button:not(.more) {
  width: 18px;
  display: grid;
  place-items: center;
  background: #b8bfce;
  border: 1px solid #8c93a5;
  border-bottom: 0;
  border-radius: 2px 2px 0 0;
}
.app .tabs button.current {
  background: #eef1f5;
}
.app .tabs .more {
  margin-left: auto;
  margin-right: 2px;
}
.filter {
  display: flex;
  align-items: center;
  height: 10px;
  margin: 0 1px 2px;
  padding-left: 3px;
  border: 1px solid #a1a8b8;
  border-radius: 6px;
  background: #fff;
}
.app .filter .ico {
  width: 9px;
  height: 9px;
}
.filter input {
  flex: 1;
}
.root {
  display: flex;
  align-items: center;
  gap: 2px;
  height: 11px;
  border-bottom: 1px solid #8e95a4;
  white-space: nowrap;
}
.tree {
  list-style: none;
  margin: 0;
  padding: 0 0 0 12px;
  height: 116px;
  display: flex;
  flex-direction: column;
  border-bottom: 1px solid #8e95a4;
  background: #e3e7eb;
}
.tree li {
  flex: 1;
  min-height: 0;
  display: flex;
  align-items: center;
  gap: 3px;
  position: relative;
}
.tree li::before {
  content: "";
  position: absolute;
  left: -5px;
  top: 0;
  bottom: 0;
  border-left: 1px solid #b3b8c0;
}
.tree li:last-child::before {
  bottom: 50%;
}
.tree li::after {
  content: "";
  position: absolute;
  left: -5px;
  width: 5px;
  border-top: 1px solid #b3b8c0;
}
.tree .expandable::after {
  content: "+";
  left: -8px;
  width: 5px;
  height: 5px;
  border: 1px solid #9aa0ac;
  background: #f7f8fa;
  font-size: 7px;
  line-height: 5px;
  text-align: center;
}
.hscroll {
  display: flex;
  align-items: center;
  justify-content: space-between;
  padding: 0 4px;
  background: #f1f2f4;
}
.panel-scroll {
  height: 11px;
  margin-top: auto;
  padding: 0 3px;
}
.thumb {
  width: 70px;
  height: 9px;
  margin-left: 4px;
  margin-right: auto;
  border: 1px solid #a3a7b0;
  border-radius: 1px;
  background: linear-gradient(#f6f6f8, #d0d3d9);
  font-size: 6px;
  line-height: 8px;
  text-align: center;
  color: #70747e;
}
.app .handle {
  position: absolute;
  z-index: 1;
  right: -6px;
  top: 271px;
  width: 6px;
  height: 19px;
  background: radial-gradient(circle, #30364a 1px, transparent 1px) 1px 1px / 4px 5px repeat-y, #e3e8ef;
  border-radius: 0 2px 2px 0;
}
.canvas {
  position: relative;
  overflow: hidden;
  min-width: 0;
  background: linear-gradient(#3d99ff, #68adf8 55%, #8dbcf5);
  box-shadow: inset 0 1px 0 #6b7fa5;
}
.drawing {
  display: block;
  width: 100%;
  height: 100%;
}
.dims text {
  font: 12px Lato, "Liberation Sans", sans-serif;
  fill: #13225c;
  stroke: none;
}
.dims .grey {
  fill: #5f83a6;
}
.axis {
  font: 8px "Liberation Sans", sans-serif;
  stroke: none;
}
.overlay {
  position: absolute;
  inset: 3px 4px auto 213px;
  display: flex;
  justify-content: space-between;
}
.overlay .heads-up {
  flex: none;
  width: 195px;
}
.overlay .doc-window {
  flex: none;
  width: 74px;
}
.overlay :deep(.ico) {
  width: 10px;
  height: 10px;
}
.view-name {
  position: absolute;
  left: 7px;
  bottom: 0;
  font: 700 8px/11px "Noto Sans", sans-serif;
  color: #14337e;
}
.task {
  display: flex;
  flex-direction: column;
  padding-top: 39px;
  background: #f2f2f3;
  border-right: 1px solid #5d6373;
  box-sizing: border-box;
}
.task nav {
  display: flex;
  flex-direction: column;
  margin-left: -3px;
  height: 92px;
  z-index: 1;
}
.app .task nav button {
  flex: 1;
  display: grid;
  place-items: center;
  background: #a9b1c3;
  box-shadow: inset 0 0 0 1px #7b8397;
}
.app .task nav button.current {
  background: #eef1f5;
}
.vscroll {
  flex: 1;
  display: flex;
  flex-direction: column;
  align-items: center;
  justify-content: space-between;
  padding: 5px 0;
}
.sheets {
  display: flex;
  height: 10px;
  border-top: 1px solid #3c4150;
  background: #c5c9d6;
  font: 8px/10px "Liberation Sans", sans-serif;
}
.app .sheets .step {
  width: 11px;
  font-size: 6px;
  color: #7d8395;
  background: #aeb4c4;
  box-shadow: inset -1px 0 0 #8c92a4;
}
.app .sheets .sheet {
  width: 67px;
  background: #bcc1d0;
  box-shadow: inset -1px 0 0 #3c4150;
}
.app .sheets .sheet.current {
  width: 42px;
  font-weight: 700;
  background: #e9ecf2;
}
.app input.height {
  background: #fbfbfd;
  color: #7b7f8c;
}
.app .pick select {
  padding-left: 2px;
}
.strip {
  flex: 3;
  background: #e3e7ef;
  border-right: 2px solid #3c4150;
}
.sheets .hscroll {
  flex: 5;
}
.corner {
  width: 11px;
  border: 1px solid #6b7184;
  border-width: 0 1px;
}
footer {
  height: 11px;
  display: flex;
  align-items: center;
  gap: 12px;
  padding: 0 4px 0 1px;
  background: linear-gradient(#c8ccdb, #b4b9cc);
}
.edition {
  margin-right: auto;
}
.app footer .ico {
  width: 9px;
  height: 9px;
}
.custom {
  display: flex;
  align-items: center;
  gap: 8px;
  margin-left: 9px;
}
footer .last {
  margin-left: 18px;
}
</style>
